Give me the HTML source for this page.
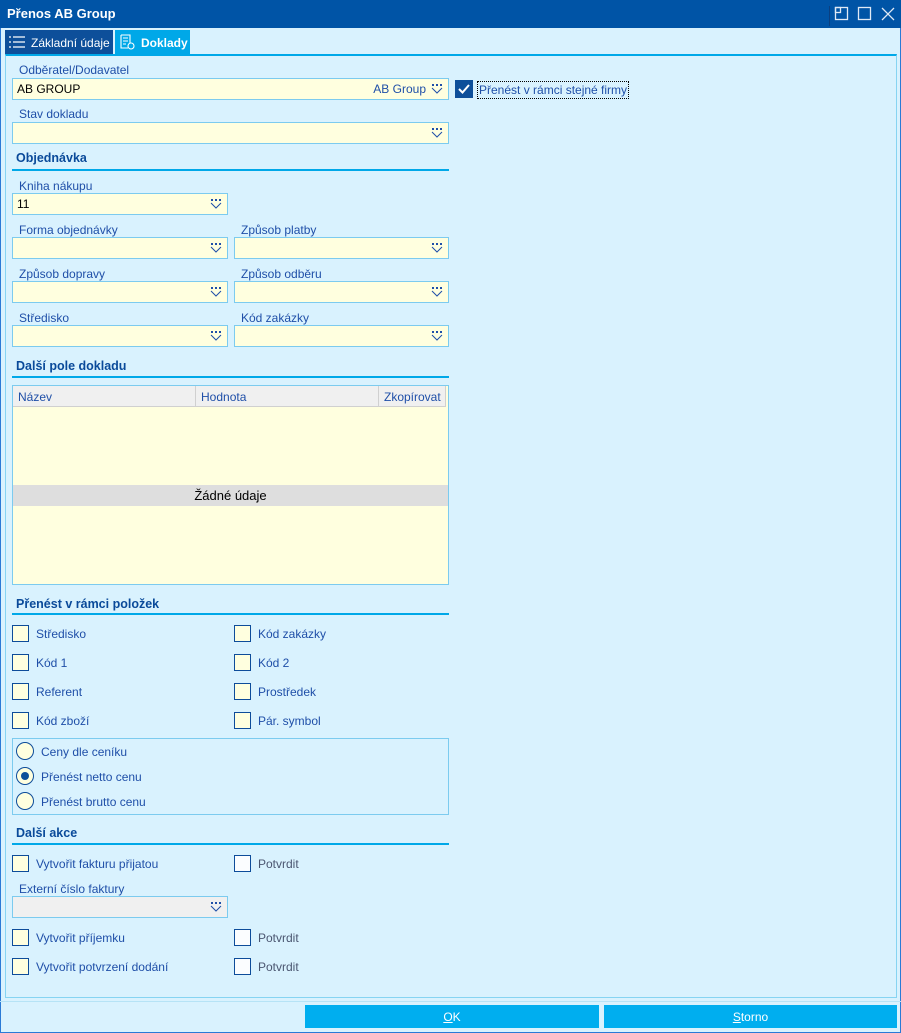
<!DOCTYPE html>
<html><head><meta charset="utf-8"><style>
*{box-sizing:border-box;margin:0;padding:0}
body{width:901px;height:1033px;background:#d9f2fe;font-family:"Liberation Sans",sans-serif;font-size:12px;position:relative;overflow:hidden}
.a{position:absolute}
.lbl{position:absolute;color:#1f4fa8;font-size:12px}
.inp{position:absolute;height:22px;background:#ffffdf;border:1px solid #7ccbef;color:#000;font-size:12px;padding:3px 4px}
.dd{position:absolute;right:5px;top:5px;width:12px;height:10px}
.hdr{position:absolute;left:16px;font-weight:bold;color:#0a4a9a;font-size:12.5px}
.line{position:absolute;left:12px;width:437px;height:2px;background:#00a8e8}
.cb{position:absolute;width:17px;height:17px;border:1px solid #0d4c9a;background:#ffffdf}
.cb.w{background:#fbfdff}
.cl{position:absolute;color:#1f4fa8;font-size:12px}
.cl.g{color:#4a5570}
.rd{position:absolute;width:18px;height:18px;border:1px solid #0d4c9a;border-radius:50%;background:#ffffdf}
</style></head><body>
<div class="a" style="left:0;top:0;width:901px;height:1033px;border:1px solid #2a7ad6"></div>
<div class="a" style="left:0;top:0;width:901px;height:28px;background:#0054a6"></div>
<div class="a" style="left:7px;top:6px;color:#fff;font-weight:bold;font-size:13px">Přenos AB Group</div>
<div class="a" style="top:6px;width:1px;height:20px;background:#0a3f80;left:829px"></div>
<svg class="a" style="left:834px;top:6px" width="62" height="16"><g fill="none" stroke="#dfe9f5" stroke-width="1.3"><rect x="1.5" y="1.5" width="12" height="12"/><rect x="1.5" y="1.5" width="5" height="5"/><rect x="24.5" y="1.5" width="12" height="12"/><path d="M48 2l12 12M60 2L48 14"/></g></svg>
<div class="a" style="left:5px;top:30px;width:108px;height:24px;background:#0d4f9a"></div>
<svg class="a" style="left:8px;top:35px" width="18" height="14"><g stroke="#fff" stroke-width="1.2"><path d="M1 2h2M5 2h12M1 7h2M5 7h12M1 12h2M5 12h12"/></g></svg>
<div class="a" style="left:31px;top:36px;color:#fff;font-size:12px">Základní údaje</div>
<div class="a" style="left:115px;top:30px;width:75px;height:25px;background:#00a8e8"></div>
<svg class="a" style="left:119px;top:34px" width="16" height="16"><g fill="none" stroke="#fff" stroke-width="1.1"><path d="M2 1h9v8M2 1v13h7"/><path d="M4 4h5M4 7h5M4 10h3"/><circle cx="12" cy="12" r="3"/></g></svg>
<div class="a" style="left:141px;top:36px;color:#fff;font-weight:bold;font-size:12px">Doklady</div>
<div class="a" style="left:5px;top:54px;width:892px;height:944px;border:1px solid #86d4f2;border-top:2px solid #00a8e8"></div>
<div class="lbl" style="left:19px;top:63px">Odběratel/Dodavatel</div>
<div class="inp" style="left:12px;top:78px;width:437px">AB GROUP<span style="position:absolute;right:22px;top:3px;color:#1f4fa8">AB Group</span><svg class="dd" viewBox="0 0 12 10"><g fill="#1f4fa8"><rect x="1" y="0" width="2" height="2"/><rect x="5" y="0" width="2" height="2"/><rect x="9" y="0" width="2" height="2"/></g><path d="M1 4l5 5 5-5" fill="none" stroke="#1f4fa8"/></svg></div>
<div class="a" style="left:455px;top:80px;width:18px;height:18px;background:#0d4f9a"></div>
<svg class="a" style="left:455px;top:80px" width="18" height="18"><path d="M4 9l3.5 3.5L14 5" fill="none" stroke="#fff" stroke-width="2"/></svg>
<div class="a" style="left:477px;top:81px;border:1px dotted #000;padding:1px 1px;color:#1f4fa8">Přenést v rámci stejné firmy</div>
<div class="lbl" style="left:19px;top:107px">Stav dokladu</div>
<div class="inp" style="left:12px;top:122px;width:437px"><svg class="dd" viewBox="0 0 12 10"><g fill="#1f4fa8"><rect x="1" y="0" width="2" height="2"/><rect x="5" y="0" width="2" height="2"/><rect x="9" y="0" width="2" height="2"/></g><path d="M1 4l5 5 5-5" fill="none" stroke="#1f4fa8"/></svg></div>
<div class="hdr" style="top:151px">Objednávka</div><div class="line" style="top:169px"></div>
<div class="lbl" style="left:19px;top:179px">Kniha nákupu</div>
<div class="inp" style="left:12px;top:193px;width:216px">11<svg class="dd" viewBox="0 0 12 10"><g fill="#1f4fa8"><rect x="1" y="0" width="2" height="2"/><rect x="5" y="0" width="2" height="2"/><rect x="9" y="0" width="2" height="2"/></g><path d="M1 4l5 5 5-5" fill="none" stroke="#1f4fa8"/></svg></div>
<div class="lbl" style="left:19px;top:223px">Forma objednávky</div>
<div class="lbl" style="left:241px;top:223px">Způsob platby</div>
<div class="inp" style="left:12px;top:237px;width:216px"><svg class="dd" viewBox="0 0 12 10"><g fill="#1f4fa8"><rect x="1" y="0" width="2" height="2"/><rect x="5" y="0" width="2" height="2"/><rect x="9" y="0" width="2" height="2"/></g><path d="M1 4l5 5 5-5" fill="none" stroke="#1f4fa8"/></svg></div>
<div class="inp" style="left:234px;top:237px;width:215px"><svg class="dd" viewBox="0 0 12 10"><g fill="#1f4fa8"><rect x="1" y="0" width="2" height="2"/><rect x="5" y="0" width="2" height="2"/><rect x="9" y="0" width="2" height="2"/></g><path d="M1 4l5 5 5-5" fill="none" stroke="#1f4fa8"/></svg></div>
<div class="lbl" style="left:19px;top:267px">Způsob dopravy</div>
<div class="lbl" style="left:241px;top:267px">Způsob odběru</div>
<div class="inp" style="left:12px;top:281px;width:216px"><svg class="dd" viewBox="0 0 12 10"><g fill="#1f4fa8"><rect x="1" y="0" width="2" height="2"/><rect x="5" y="0" width="2" height="2"/><rect x="9" y="0" width="2" height="2"/></g><path d="M1 4l5 5 5-5" fill="none" stroke="#1f4fa8"/></svg></div>
<div class="inp" style="left:234px;top:281px;width:215px"><svg class="dd" viewBox="0 0 12 10"><g fill="#1f4fa8"><rect x="1" y="0" width="2" height="2"/><rect x="5" y="0" width="2" height="2"/><rect x="9" y="0" width="2" height="2"/></g><path d="M1 4l5 5 5-5" fill="none" stroke="#1f4fa8"/></svg></div>
<div class="lbl" style="left:19px;top:311px">Středisko</div>
<div class="lbl" style="left:241px;top:311px">Kód zakázky</div>
<div class="inp" style="left:12px;top:325px;width:216px"><svg class="dd" viewBox="0 0 12 10"><g fill="#1f4fa8"><rect x="1" y="0" width="2" height="2"/><rect x="5" y="0" width="2" height="2"/><rect x="9" y="0" width="2" height="2"/></g><path d="M1 4l5 5 5-5" fill="none" stroke="#1f4fa8"/></svg></div>
<div class="inp" style="left:234px;top:325px;width:215px"><svg class="dd" viewBox="0 0 12 10"><g fill="#1f4fa8"><rect x="1" y="0" width="2" height="2"/><rect x="5" y="0" width="2" height="2"/><rect x="9" y="0" width="2" height="2"/></g><path d="M1 4l5 5 5-5" fill="none" stroke="#1f4fa8"/></svg></div>
<div class="hdr" style="top:359px">Další pole dokladu</div><div class="line" style="top:376px"></div>
<div class="a" style="left:12px;top:385px;width:437px;height:200px;background:#ffffdf;border:1px solid #7ccbef"></div>
<div class="a" style="left:13px;top:386px;width:433px;height:21px;background:#f0f0f0;border-bottom:1px solid #d0d0d0"></div>
<div class="a" style="left:195px;top:386px;width:1px;height:21px;background:#d0d0d0"></div>
<div class="a" style="left:378px;top:386px;width:1px;height:21px;background:#d0d0d0"></div>
<div class="a" style="left:445px;top:386px;width:1px;height:21px;background:#d0d0d0"></div>
<div class="lbl" style="left:18px;top:390px">Název</div>
<div class="lbl" style="left:201px;top:390px">Hodnota</div>
<div class="lbl" style="left:384px;top:390px">Zkopírovat</div>
<div class="a" style="left:13px;top:485px;width:435px;height:21px;background:#dedede;text-align:center;padding-top:3px;font-size:13px">Žádné údaje</div>
<div class="hdr" style="top:597px">Přenést v rámci položek</div><div class="line" style="top:613px"></div>
<div class="cb" style="left:12px;top:625px"></div><div class="cl" style="left:36px;top:627px">Středisko</div>
<div class="cb" style="left:234px;top:625px"></div><div class="cl" style="left:258px;top:627px">Kód zakázky</div>
<div class="cb" style="left:12px;top:654px"></div><div class="cl" style="left:36px;top:656px">Kód 1</div>
<div class="cb" style="left:234px;top:654px"></div><div class="cl" style="left:258px;top:656px">Kód 2</div>
<div class="cb" style="left:12px;top:683px"></div><div class="cl" style="left:36px;top:685px">Referent</div>
<div class="cb" style="left:234px;top:683px"></div><div class="cl" style="left:258px;top:685px">Prostředek</div>
<div class="cb" style="left:12px;top:712px"></div><div class="cl" style="left:36px;top:714px">Kód zboží</div>
<div class="cb" style="left:234px;top:712px"></div><div class="cl" style="left:258px;top:714px">Pár. symbol</div>
<div class="a" style="left:12px;top:738px;width:437px;height:77px;border:1px solid #7ccbef"></div>
<div class="rd" style="left:16px;top:742px"></div><div class="cl" style="left:41px;top:745px">Ceny dle ceníku</div>
<div class="rd" style="left:16px;top:767px"></div><div class="a" style="left:21px;top:772px;width:8px;height:8px;border-radius:50%;background:#0d4f9a"></div><div class="cl" style="left:41px;top:770px">Přenést netto cenu</div>
<div class="rd" style="left:16px;top:792px"></div><div class="cl" style="left:41px;top:795px">Přenést brutto cenu</div>
<div class="hdr" style="top:826px">Další akce</div><div class="line" style="top:843px"></div>
<div class="cb" style="left:12px;top:855px"></div><div class="cl" style="left:36px;top:857px">Vytvořit fakturu přijatou</div>
<div class="cb w" style="left:234px;top:855px"></div><div class="cl g" style="left:258px;top:857px">Potvrdit</div>
<div class="lbl" style="left:19px;top:882px">Externí číslo faktury</div>
<div class="inp" style="left:12px;top:896px;width:216px;background:#f0f0f0"><svg class="dd" viewBox="0 0 12 10"><g fill="#1f4fa8"><rect x="1" y="0" width="2" height="2"/><rect x="5" y="0" width="2" height="2"/><rect x="9" y="0" width="2" height="2"/></g><path d="M1 4l5 5 5-5" fill="none" stroke="#1f4fa8"/></svg></div>
<div class="cb" style="left:12px;top:929px"></div><div class="cl" style="left:36px;top:931px">Vytvořit příjemku</div>
<div class="cb w" style="left:234px;top:929px"></div><div class="cl g" style="left:258px;top:931px">Potvrdit</div>
<div class="cb" style="left:12px;top:958px"></div><div class="cl" style="left:36px;top:960px">Vytvořit potvrzení dodání</div>
<div class="cb w" style="left:234px;top:958px"></div><div class="cl g" style="left:258px;top:960px">Potvrdit</div>
<div class="a" style="left:0;top:1001px;width:901px;height:1px;background:#b6e3f6"></div>
<div class="a" style="left:305px;top:1005px;width:294px;height:23px;background:#00aeef;color:#fff;text-align:center;padding-top:5px"><u>O</u>K</div>
<div class="a" style="left:604px;top:1005px;width:293px;height:23px;background:#00aeef;color:#fff;text-align:center;padding-top:5px"><u>S</u>torno</div>
</body></html>
